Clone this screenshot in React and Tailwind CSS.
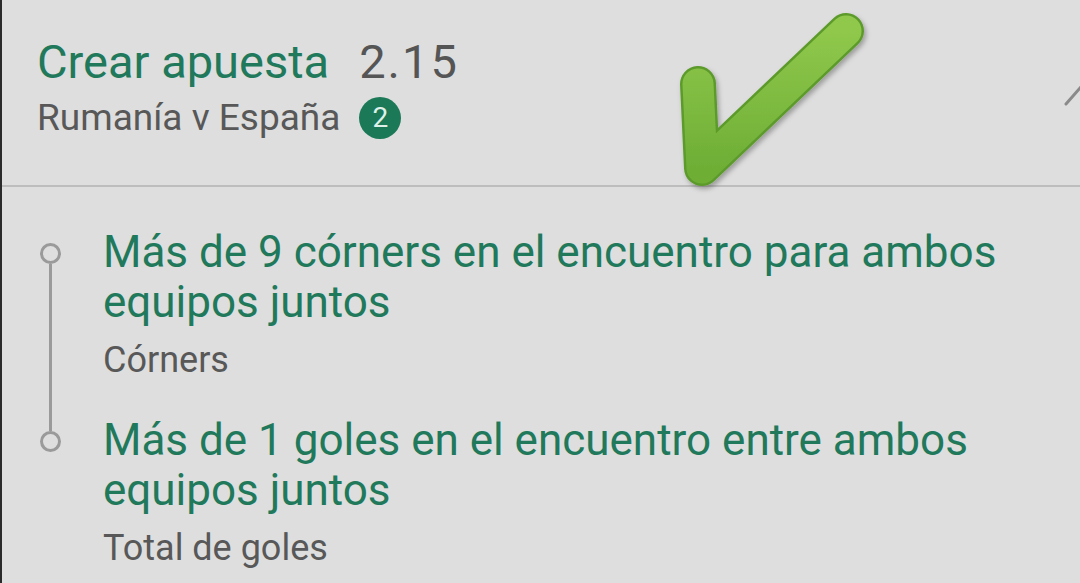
import React from "react";

const GREEN = "text-[#21795b]";

function CheckMark() {
  return (
    <svg
      className="pointer-events-none absolute left-[660px] top-0"
      width="230"
      height="205"
      viewBox="660 0 230 205"
    >
      <defs>
        <linearGradient id="chk" x1="0" y1="0" x2="0" y2="1">
          <stop offset="0" stopColor="#8fc84b" />
          <stop offset="1" stopColor="#6eae36" />
        </linearGradient>
        <filter id="sh" x="-20%" y="-20%" width="140%" height="140%">
          <feDropShadow dx="2" dy="3" stdDeviation="2.5" floodColor="#000" floodOpacity="0.3" />
        </filter>
      </defs>
      <g filter="url(#sh)" fill="none" strokeLinecap="round" strokeLinejoin="round">
        <polyline points="696,84 700,168 844,31" stroke="#5c9a2c" strokeWidth="36" />
        <polyline points="696,84 700,168 844,31" stroke="url(#chk)" strokeWidth="31" />
      </g>
    </svg>
  );
}

function BetLeg({ title, market, first, last }) {
  return (
    <div className="flex">
      <div className="flex w-[101px] shrink-0 flex-col items-center pr-[4px]">
        <div className={`w-[3px] ${first ? "h-[16px] bg-transparent" : "h-[16px] bg-[#9a9a9a]"}`} />
        <div className="h-[21px] w-[21px] shrink-0 rounded-full border-[3px] border-[#9a9a9a]" />
        {!last && <div className="w-[3px] flex-1 bg-[#9a9a9a]" />}
      </div>
      <div className={`flex-1 pr-2 ${last ? "pb-4" : "pb-[33px]"}`}>
        <div className={`text-[44px] leading-[50px] ${GREEN}`}>{title}</div>
        <div className="mt-[11px] text-[36px] leading-[44px] text-[#585858]">{market}</div>
      </div>
    </div>
  );
}

export default function App() {
  return (
    <div
      className="relative h-[583px] w-[1080px] overflow-hidden border-l-2 border-[#2a2a2a] bg-[#dedede]"
      style={{ fontFamily: "Roboto, 'Noto Sans', sans-serif" }}
    >
      <div className="flex h-[187px] items-start border-b-2 border-[#bdbdbd] pl-[35px]">
        <div className="flex-1 pt-[34px]">
          <div className="flex items-baseline gap-[30px] text-[47px] leading-[56px]">
            <span className={GREEN}>Crear apuesta</span>
            <span className="tracking-[2px] text-[#555555]">2.15</span>
          </div>
          <div className="mt-[6px] flex items-center gap-[19px]">
            <span className="text-[37px] leading-[44px] text-[#585858]">Rumanía v España</span>
            <span className="flex h-[42px] w-[42px] items-center justify-center rounded-full bg-[#1c7958] text-[28px] leading-none text-[#dff0e8]">
              2
            </span>
          </div>
        </div>
        <svg className="mt-[80px] -mr-[14px] shrink-0" width="30" height="30" viewBox="0 0 30 30">
          <path d="M2 24 L16 8 L30 24" fill="none" stroke="#8a8a8a" strokeWidth="3" strokeLinecap="round" />
        </svg>
      </div>

      <div className="pt-[40px]">
        <BetLeg
          first
          title="Más de 9 córners en el encuentro para ambos equipos juntos"
          market="Córners"
        />
        <BetLeg
          last
          title="Más de 1 goles en el encuentro entre ambos equipos juntos"
          market="Total de goles"
        />
      </div>

      <CheckMark />
    </div>
  );
}
